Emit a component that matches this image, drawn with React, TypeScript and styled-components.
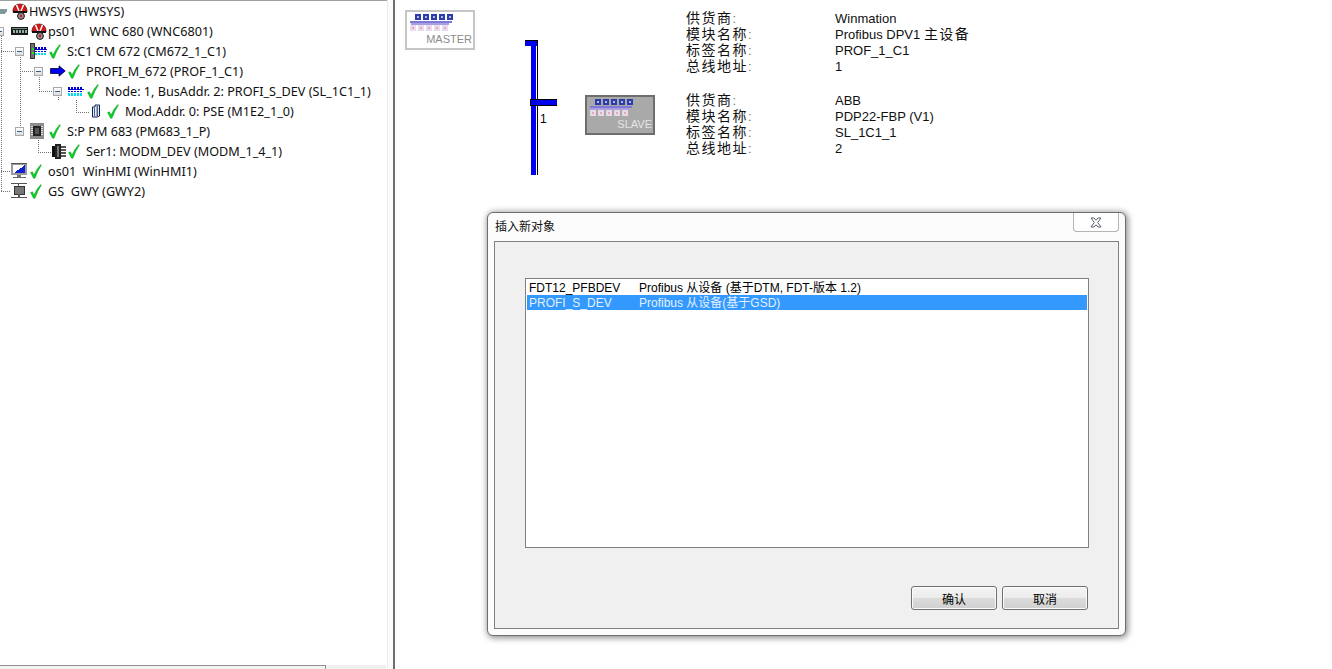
import React from "react";
import styled, { createGlobalStyle } from "styled-components";

const GlobalStyle = createGlobalStyle`
  html, body {
    margin: 0;
    padding: 0;
    background: #fff;
  }
  body {
    font-family: "Liberation Sans", "Noto Sans CJK SC", sans-serif;
    font-size: 12px;
    color: #000;
  }
`;

function HatIcon() {
  return (
    <svg width="16" height="17" viewBox="0 0 16 17">
      <path d="M1 7 Q2 1 8 1 Q14 1 15 7 L15 9 L1 9 Z" fill="#d81818" stroke="#300" strokeWidth="0.6" />
      <path d="M4.5 2 L7 8 M11.5 2 L9 8" stroke="#fff" strokeWidth="1.5" />
      <rect x="1" y="8" width="14" height="2" fill="#111" />
      <rect x="3" y="10" width="10" height="1" fill="#fff" />
      <circle cx="9" cy="13" r="3.4" fill="#9a9a9a" stroke="#111" />
      <circle cx="9" cy="13" r="1.4" fill="#c82020" />
    </svg>
  );
}

function BoardIcon() {
  return (
    <svg width="18" height="8" viewBox="-1 0 18 8" shapeRendering="crispEdges">
      <rect width="17" height="8" fill="#1a1a1a" />
      <rect x="1" y="1" width="15" height="1" fill="#6f8f80" />
      {[2, 5, 8, 11, 14].map((x) => (
        <rect key={x} x={x} y="3" width="2" height="3" fill="#8fb0a8" />
      ))}
    </svg>
  );
}

function CmIcon() {
  return (
    <svg width="17" height="16" viewBox="0 0 17 16" shapeRendering="crispEdges">
      <rect x="0" y="0" width="5" height="16" fill="#333" />
      <rect x="1" y="1" width="3" height="14" fill="#707070" />
      <rect x="2" y="5" width="2" height="2" fill="#20e020" />
      <rect x="2" y="9" width="2" height="2" fill="#20e020" />
      <rect x="5" y="6" width="12" height="1" fill="#0000d0" />
      {[5, 8, 11, 14].map((x) => (
        <React.Fragment key={x}>
          <rect x={x} y="4" width="2" height="2" fill="#0000d0" />
          <rect x={x} y="8" width="2" height="1" fill="#0000d0" />
          <rect x={x} y="10" width="2" height="2" fill="#00e0f0" />
        </React.Fragment>
      ))}
    </svg>
  );
}

function ArrowIcon() {
  return (
    <svg width="17" height="12" viewBox="-1 0 17 12">
      <path d="M0.5 3.5 H9 V0.8 L15.2 6 L9 11.2 V8.5 H0.5 Z" fill="#0000f0" stroke="#000030" strokeWidth="0.8" />
    </svg>
  );
}

function NetIcon() {
  return (
    <svg width="17" height="12" viewBox="0 0 17 12" shapeRendering="crispEdges">
      <rect x="0" y="4" width="16" height="1" fill="#0000d0" />
      {[0, 3, 6, 9, 12].map((d) => (
        <React.Fragment key={d}>
          <rect x={d} y="2" width="2" height="2" fill="#0000d0" />
          <rect x={d} y="6" width="2" height="1" fill="#0000d0" />
          <rect x={d} y="8" width="2" height="3" fill="#00e0f0" />
        </React.Fragment>
      ))}
    </svg>
  );
}

function ModIcon() {
  return (
    <svg width="13" height="14" viewBox="0 0 13 14">
      <path d="M0.5 3 L3 3 L3 1 L7.5 1 L7.5 12 L5 13 L0.5 13 Z" fill="#e8eef8" stroke="#102050" />
      <path d="M5.2 2 V12" stroke="#102050" />
      <path d="M2.5 4 V12" stroke="#4060a0" />
    </svg>
  );
}

function ChipIcon() {
  return (
    <svg width="17" height="16" viewBox="0 0 17 16" shapeRendering="crispEdges">
      <rect width="14" height="16" fill="#8c8c8c" />
      <rect x="3" y="3" width="8" height="10" fill="#222" />
      {[3, 5, 7, 9, 11].map((y) => (
        <React.Fragment key={y}>
          <rect x="1" y={y} width="2" height="1" fill="#e0e0e0" />
          <rect x="11" y={y} width="2" height="1" fill="#e0e0e0" />
        </React.Fragment>
      ))}
      <rect x="5" y="5" width="4" height="6" fill="#555" />
    </svg>
  );
}

function PlugIcon() {
  return (
    <svg width="14" height="15" viewBox="0 0 14 15" shapeRendering="crispEdges">
      <rect x="0" y="2" width="3" height="11" fill="#111" />
      <rect x="3" y="0" width="6" height="15" fill="#222" />
      <rect x="5" y="2" width="2" height="11" fill="#777" />
      {[2, 5, 8, 11].map((y) => (
        <rect key={y} x="9" y={y} width="5" height="2" fill="#555" />
      ))}
    </svg>
  );
}

function MonitorIcon() {
  return (
    <svg width="17" height="16" viewBox="0 0 17 16" shapeRendering="crispEdges">
      <rect width="16" height="12" fill="#9a9a9a" />
      <rect x="0" y="0" width="16" height="1" fill="#555" />
      <rect x="2" y="2" width="12" height="8" fill="#fff" />
      <polygon points="14,2 14,10 3,10" fill="#1020d0" />
      <rect x="6" y="12" width="4" height="2" fill="#777" />
      <rect x="2" y="14" width="13" height="1" fill="#666" />
    </svg>
  );
}

function GatewayIcon() {
  return (
    <svg width="17" height="16" viewBox="0 0 17 16" shapeRendering="crispEdges">
      <rect x="0" y="0" width="16" height="1" fill="#555" />
      <rect x="3" y="3" width="10" height="8" fill="#777" stroke="#333" />
      <rect x="7" y="1" width="1" height="2" fill="#555" />
      <rect x="7" y="11" width="2" height="3" fill="#555" />
      <rect x="0" y="14" width="16" height="1" fill="#555" />
    </svg>
  );
}

function CheckIcon() {
  return (
    <svg width="12" height="15" viewBox="0 0 12 15">
      <path d="M0.6 8.6 L2.4 7.8 L4 11 Q6.5 5 10.8 0.6 L11.4 1 Q7.5 7 5 14.2 L3.5 14.2 Z" fill="#00d820" stroke="#0a7a1a" strokeWidth="0.4" />
    </svg>
  );
}

function CloseGlyph() {
  return (
    <svg width="12" height="11" viewBox="0 0 12 11">
      <path d="M1 1 H4 L6 3.2 L8 1 H11 L7.7 5.5 L11 10 H8 L6 7.8 L4 10 H1 L4.3 5.5 Z" fill="#fff" stroke="#5a6070" strokeWidth="1" />
    </svg>
  );
}

function ProfiLogo({ dark }: { dark?: boolean }) {
  const pale = dark ? "#e8d8e8" : "#eadcf0";
  return (
    <svg width="44" height="18" viewBox="0 0 44 18" shapeRendering="crispEdges">
      {[5, 13, 21, 29, 37].map((x) => (
        <React.Fragment key={x}>
          <rect x={x} y="0" width="6" height="6" fill="#2c3ca8" />
          <rect x={x + 2} y="2" width="2" height="2" fill="#b0b8f0" />
        </React.Fragment>
      ))}
      <rect x="0" y="7" width="42" height="2" fill="#7f78d8" />
      <rect x="1" y="9" width="38" height="2" fill="#a9a0e0" />
      {[0, 8, 16, 24, 32].map((x) => (
        <React.Fragment key={x}>
          <rect x={x} y="11" width="6" height="6" fill={pale} />
          <rect x={x + 2} y="13" width="2" height="2" fill="#e8a8b8" />
        </React.Fragment>
      ))}
    </svg>
  );
}

function BusDrawing() {
  return (
    <svg width="32" height="137" viewBox="0 0 32 137" shapeRendering="crispEdges">
      <rect x="0" y="2" width="13" height="1" fill="#000" />
      <rect x="0" y="3" width="12" height="5" fill="#0000f0" />
      <rect x="12" y="2" width="1" height="6" fill="#000" />
      <rect x="6" y="3" width="5" height="134" fill="#0000f0" />
      <rect x="12" y="8" width="1" height="129" fill="#000" />
      <rect x="5" y="61" width="27" height="7" fill="#000" />
      <rect x="6" y="62" width="26" height="5" fill="#0000f0" />
    </svg>
  );
}

function TreeGuides() {
  return (
    <GuideLayer width="387" height="210" viewBox="0 0 387 210" shapeRendering="crispEdges">
      <path d="M0 9 H7 V11 L4 14 H0 Z" fill="#7f9a98" />
      <path
        d="M1 36 V191 M1 51 H15 M1 171 H11 M1 191 H11 M20 57 V126 M20 71 H34 M39 77 V91 M39 91 H53 M58 97 V100 M76 100 V112 M76 112 H90 M38 140 V152 M38 152 H52"
        fill="none"
        stroke="#707070"
        strokeDasharray="1 1"
      />
    </GuideLayer>
  );
}

type TreeItem = {
  indent: number;
  expander?: boolean;
  icons: React.ReactNode[];
  iconGap?: number;
  check?: boolean;
  label: string;
};

const treeItems: TreeItem[] = [
  { indent: 12, icons: [<HatIcon key="h" />], label: "HWSYS (HWSYS)" },
  { indent: -5, expander: true, icons: [<BoardIcon key="b" />, <HatIcon key="h" />], iconGap: 3, label: "ps01    WNC 680 (WNC6801)" },
  { indent: 15, expander: true, icons: [<CmIcon key="c" />], check: true, label: "S:C1 CM 672 (CM672_1_C1)" },
  { indent: 34, expander: true, icons: [<ArrowIcon key="a" />], check: true, label: "PROFI_M_672 (PROF_1_C1)" },
  { indent: 53, expander: true, icons: [<NetIcon key="n" />], check: true, label: "Node: 1, BusAddr. 2: PROFI_S_DEV (SL_1C1_1)" },
  { indent: 92, icons: [<ModIcon key="m" />], check: true, label: "Mod.Addr. 0: PSE (M1E2_1_0)" },
  { indent: 15, expander: true, icons: [<ChipIcon key="c" />], check: true, label: "S:P PM 683 (PM683_1_P)" },
  { indent: 52, icons: [<PlugIcon key="p" />], check: true, label: "Ser1: MODM_DEV (MODM_1_4_1)" },
  { indent: 11, icons: [<MonitorIcon key="m" />], check: true, label: "os01  WinHMI (WinHMI1)" },
  { indent: 11, icons: [<GatewayIcon key="g" />], check: true, label: "GS  GWY (GWY2)" },
];

const infoBlocks: [string, React.ReactNode][][] = [
  [
    ["供货商", "Winmation"],
    ["模块名称", <>Profibus DPV1 <Cjk>主设备</Cjk></>],
    ["标签名称", "PROF_1_C1"],
    ["总线地址", "1"],
  ],
  [
    ["供货商", "ABB"],
    ["模块名称", "PDP22-FBP (V1)"],
    ["标签名称", "SL_1C1_1"],
    ["总线地址", "2"],
  ],
];

function Cjk({ children }: { children: React.ReactNode }) {
  return <WideCjk>{children}</WideCjk>;
}

export default function App() {
  return (
    <Page>
      <GlobalStyle />
      <TreePane>
        <TreeGuides />
        <TreeList>
          {treeItems.map((item) => (
            <TreeRow key={item.label} $indent={item.indent}>
              {item.expander && <Expander />}
              <TreeIcons $gap={item.iconGap ?? 0}>{item.icons}</TreeIcons>
              {item.check && <CheckSlot><CheckIcon /></CheckSlot>}
              <TreeLabel $check={!!item.check}>{item.label}</TreeLabel>
            </TreeRow>
          ))}
        </TreeList>
        <ScrollTrack>
          <ScrollThumb />
        </ScrollTrack>
      </TreePane>
      <Splitter />
      <MainPane>
        <Overview>
          <DeviceCard>
            <ProfiLogo />
            <CardName>MASTER</CardName>
          </DeviceCard>
          <BusSlot>
            <BusDrawing />
            <BusNumber>1</BusNumber>
          </BusSlot>
          <DeviceCard $slave>
            <ProfiLogo dark />
            <CardName $slave>SLAVE</CardName>
          </DeviceCard>
          <InfoColumn>
            {infoBlocks.map((block, i) => (
              <InfoBlock key={i}>
                {block.map(([name, value]) => (
                  <React.Fragment key={name}>
                    <span><Cjk>{name}</Cjk><Colon>:</Colon></span>
                    <span>{value}</span>
                  </React.Fragment>
                ))}
              </InfoBlock>
            ))}
          </InfoColumn>
        </Overview>
        <Dialog>
          <TitleBar>
            <span>插入新对象</span>
            <CloseButton><CloseGlyph /></CloseButton>
          </TitleBar>
          <ClientArea>
            <ListBox>
              <ListItem>
                <ItemName>FDT12_PFBDEV</ItemName>
                <span>Profibus 从设备 (基于DTM, FDT-版本 1.2)</span>
              </ListItem>
              <ListItem $selected>
                <ItemName>PROFI_S_DEV</ItemName>
                <span>Profibus 从设备(基于GSD)</span>
              </ListItem>
            </ListBox>
            <ButtonRow>
              <DialogButton>确认</DialogButton>
              <DialogButton>取消</DialogButton>
            </ButtonRow>
          </ClientArea>
        </Dialog>
      </MainPane>
    </Page>
  );
}

const Page = styled.div`
  display: flex;
  width: 1332px;
  height: 669px;
  overflow: hidden;
  background: #fff;
`;

const TreePane = styled.div`
  position: relative;
  display: flex;
  flex-direction: column;
  justify-content: space-between;
  width: 387px;
  border-top: 1px solid #a0a0a0;
  box-sizing: border-box;
  overflow: hidden;
  font-family: "Noto Sans", "Noto Sans CJK SC", sans-serif;
`;

const GuideLayer = styled.svg`
  position: absolute;
  left: 0;
  top: -1px;
  pointer-events: none;
`;

const TreeList = styled.div`
  position: relative;
`;

const TreeRow = styled.div<{ $indent: number }>`
  display: flex;
  align-items: center;
  height: 20px;
  margin-left: ${(p) => p.$indent}px;
  white-space: pre;
`;

const Expander = styled.div`
  position: relative;
  flex: none;
  width: 9px;
  height: 9px;
  margin-right: 6px;
  box-sizing: border-box;
  border: 1px solid #a8a8a8;
  background: linear-gradient(#fff, #dcdcdc);

  &::after {
    content: "";
    position: absolute;
    left: 1px;
    top: 3px;
    width: 5px;
    height: 1px;
    background: #3c5a90;
  }
`;

const TreeIcons = styled.div<{ $gap: number }>`
  display: flex;
  align-items: center;
  gap: ${(p) => p.$gap}px;

  svg {
    display: block;
  }
`;

const CheckSlot = styled.div`
  display: flex;
  margin-left: 2px;

  svg {
    display: block;
  }
`;

const TreeLabel = styled.span<{ $check: boolean }>`
  margin-left: ${(p) => (p.$check ? 6 : 1)}px;
  font-size: 12.65px;
  line-height: 20px;
  color: #101010;
`;

const ScrollTrack = styled.div`
  height: 4px;
  background: #f0f0f0;
  margin-right: 1px;
`;

const ScrollThumb = styled.div`
  width: 326px;
  height: 4px;
  box-sizing: border-box;
  border-top: 1px solid #909090;
  border-right: 1px solid #909090;
  background: #f4f4f4;
`;

const Splitter = styled.div`
  flex: none;
  width: 8px;
  box-sizing: border-box;
  background: #fbfbfb;
  border-left: 1px solid #ececec;
  border-right: 2px solid #6e6e6e;
`;

const MainPane = styled.div`
  position: relative;
  flex: 1;
`;

const Overview = styled.div`
  display: flex;
  align-items: flex-start;
  padding-left: 10px;
`;

const DeviceCard = styled.div<{ $slave?: boolean }>`
  display: flex;
  flex-direction: column;
  align-items: flex-start;
  flex: none;
  width: 70px;
  height: 40px;
  box-sizing: border-box;
  margin-top: ${(p) => (p.$slave ? 95 : 10)}px;
  padding: 2px 0 0 3px;
  border: 2px solid ${(p) => (p.$slave ? "#6e6e6e" : "#c6c6c6")};
  background: ${(p) => (p.$slave ? "#a9a9a9" : "#fff")};

  svg {
    display: block;
    flex: none;
    filter: blur(0.4px);
  }
`;

const CardName = styled.span<{ $slave?: boolean }>`
  align-self: flex-end;
  margin: 1px 1px 0 0;
  font-size: 11px;
  line-height: 13px;
  color: ${(p) => (p.$slave ? "#e4e4e4" : "#8c8c8c")};
`;

const BusSlot = styled.div`
  position: relative;
  flex: none;
  width: 32px;
  height: 137px;
  margin: 38px 28px 0 50px;

  svg {
    display: block;
  }
`;

const BusNumber = styled.span`
  position: absolute;
  left: 15px;
  top: 74px;
  font-size: 12px;
  line-height: 14px;
`;

const InfoColumn = styled.div`
  display: flex;
  flex-direction: column;
  gap: 18px;
  margin: 10px 0 0 31px;
`;

const InfoBlock = styled.div`
  display: grid;
  grid-template-columns: 149px auto;
  grid-auto-rows: 16px;
  font-size: 13px;
  line-height: 17px;
  color: #101010;
  white-space: nowrap;
`;

const WideCjk = styled.span`
  font-size: 14px;
  letter-spacing: 1.5px;
`;

const Colon = styled.span`
  color: #777;
`;

const Dialog = styled.div`
  position: absolute;
  left: 92px;
  top: 212px;
  display: flex;
  flex-direction: column;
  width: 639px;
  height: 424px;
  box-sizing: border-box;
  padding: 0 6px 6px;
  border: 1px solid #6e6e6e;
  border-radius: 6px;
  background: #fcfcfc;
  box-shadow: 1px 1px 6px 1px rgba(0, 0, 0, 0.45);
`;

const TitleBar = styled.div`
  display: flex;
  justify-content: space-between;
  height: 28px;
  padding-left: 1px;
  font-size: 12px;
  line-height: 29px;
  color: #111;
`;

const CloseButton = styled.div`
  display: flex;
  align-items: center;
  justify-content: center;
  width: 46px;
  height: 19px;
  box-sizing: border-box;
  border: 1px solid #b4b4b4;
  border-top: none;
  border-radius: 0 0 4px 4px;
  background: #fff;
`;

const ClientArea = styled.div`
  display: flex;
  flex-direction: column;
  flex: 1;
  box-sizing: border-box;
  padding: 36px 29px 0 30px;
  border: 1px solid #808080;
  background: #f0f0f0;
`;

const ListBox = styled.div`
  height: 270px;
  box-sizing: border-box;
  padding: 1px;
  border: 1px solid #808080;
  background: #fff;
`;

const ListItem = styled.div<{ $selected?: boolean }>`
  display: flex;
  height: 15px;
  padding-left: 2px;
  font-size: 12px;
  line-height: 16px;
  white-space: nowrap;
  color: ${(p) => (p.$selected ? "#e2f0ff" : "#000")};
  background: ${(p) => (p.$selected ? "#3399ff" : "transparent")};
`;

const ItemName = styled.span`
  flex: none;
  width: 110px;
`;

const ButtonRow = styled.div`
  display: flex;
  justify-content: flex-end;
  gap: 5px;
  margin: 38px 1px 0 0;
`;

const DialogButton = styled.button`
  width: 86px;
  height: 24px;
  padding: 0;
  border: 1px solid #707070;
  border-radius: 3px;
  background: linear-gradient(#f4f4f4 0%, #ececec 48%, #dcdcdc 50%, #d0d0d0 100%);
  box-shadow: inset 0 0 0 1px #fbfbfb;
  font-family: "Noto Sans CJK SC", sans-serif;
  font-size: 12px;
  color: #000;
`;
